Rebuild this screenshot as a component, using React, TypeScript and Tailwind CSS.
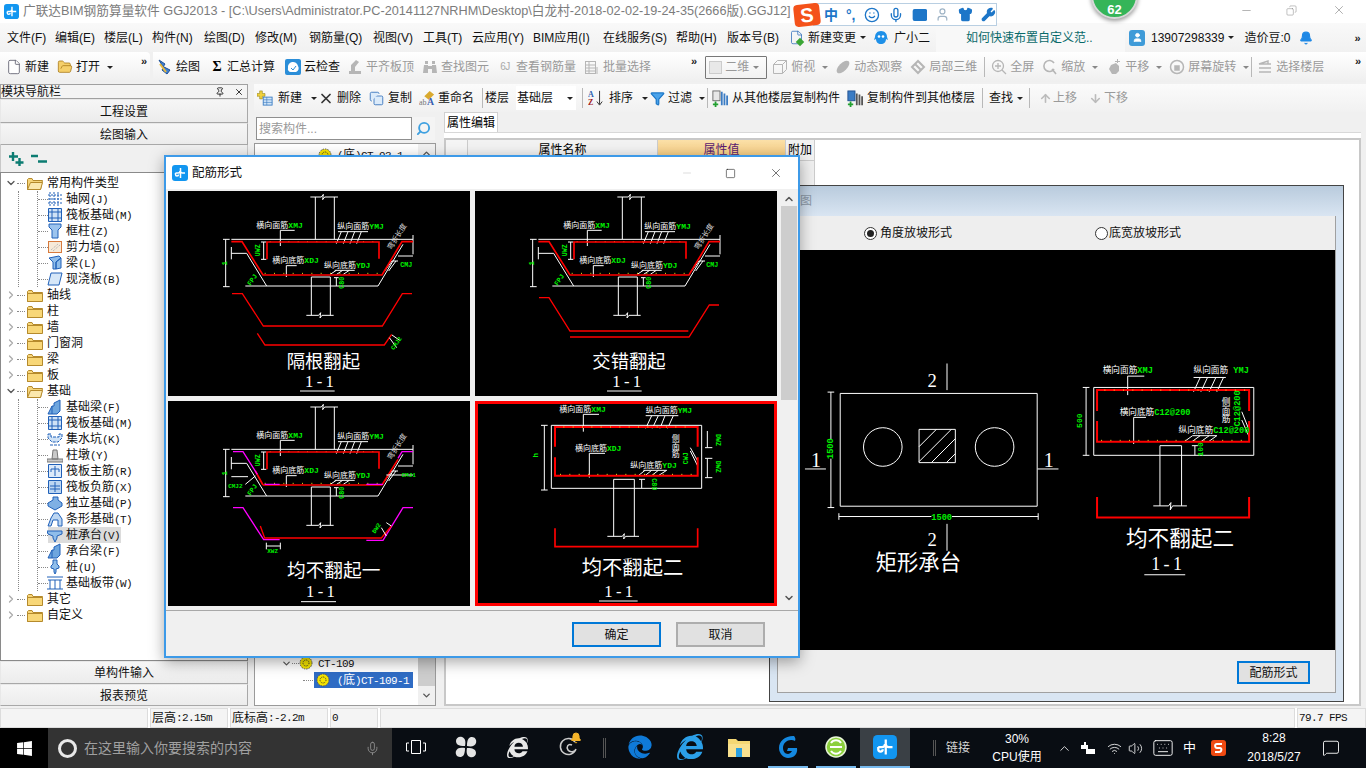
import type { ReactNode } from "react";
import { File, FolderOpen, Mic, Search, Wifi, Volume2, ChevronUp, ChevronDown, ChevronRight, X, Minus, Square, Copy, Pin, Filter, ArrowUp, ArrowDown, Bell, Wrench, Smile, Keyboard, Shirt, User, MessageSquare } from "lucide-react";
import { FaEdge, FaInternetExplorer, FaWindows } from "react-icons/fa";

const UI = "[font-family:'Liberation_Sans','Noto_Sans_CJK_SC',sans-serif]";
const CAD_FONT = "'Liberation Mono','Noto Sans CJK SC',monospace";
const CAD_TITLE = "'Liberation Serif','Noto Sans CJK SC',serif";

// ascii parts of the old tree font are narrow, 6px per char
const Mixed = ({ text }: { text: string }) => (
  <>
    {text.split(/([\x00-\x7f]+)/).map((part, i) =>
      /^[\x00-\x7f]+$/.test(part) ? (
        <span key={i} className="text-[11px] tracking-[-0.6px] [font-family:'Liberation_Mono',monospace]">
          {part}
        </span>
      ) : (
        <span key={i}>{part}</span>
      ),
    )}
  </>
);

const GldLogo = ({ size = 16 }: { size?: number }) => (
  <svg width={size} height={size} viewBox="0 0 16 16">
    <rect width="16" height="16" rx="3" fill="#1296f0" />
    <path d="M8.5 3v10M3.5 8h2.5a2 2 0 0 0 2-2M13 8h-2.5a2 2 0 0 1-2-2M3.5 8v1.5a1.5 1.5 0 0 0 3 0" stroke="#fff" strokeWidth="1.5" fill="none" />
  </svg>
);

const Caret = () => <span className="w-0 h-0 border-x-[3px] border-x-transparent border-t-[3px] border-t-[#222] ml-1" />;
const GrayCaret = () => <span className="w-0 h-0 border-x-[3px] border-x-transparent border-t-[3px] border-t-[#888] ml-1" />;
const More = () => <span className="text-[11px] font-bold text-[#222] leading-none">»</span>;
const Sep = () => <span className="w-px h-[20px] bg-[#b8b8b8] shrink-0 block" />;

const gray = "#b6b6b6";
const toolIcons: Record<string, ReactNode> = {
  file: <File size={16} strokeWidth={1.2} color="#556" fill="#fff" />,
  open: <FolderOpen size={16} strokeWidth={1.2} color="#a87a18" fill="#f5cf6a" />,
  draw: (
    <svg width="16" height="16" viewBox="0 0 16 16">
      <path d="M2 1l6 4-2 3zM7 8l6 3-3 4-5-4z" fill="#3f7fd0" stroke="#1d4f96" />
      <path d="M3 5l6 8" stroke="#e8b93c" strokeWidth="2" />
    </svg>
  ),
  sigma: <span className="text-[14px] font-bold text-black leading-none [font-family:'Liberation_Serif',serif]">Σ</span>,
  cloud: (
    <svg width="16" height="16" viewBox="0 0 16 16">
      <rect width="16" height="16" rx="2" fill="#2b8ed8" />
      <path d="M3 9a5 5 0 0 1 10-2 4 4 0 0 1-2 6H6a3 3 0 0 1-3-4z" fill="#fff" />
      <path d="M6 9l2 2 3-4" stroke="#2b8ed8" fill="none" />
    </svg>
  ),
  level: (
    <svg width="16" height="16" viewBox="0 0 16 16" fill={gray}>
      <path d="M2 12h12v3H2zM4 6l5-5 3 2-4 5v4H4z" />
    </svg>
  ),
  binoc: (
    <svg width="16" height="16" viewBox="0 0 16 16" fill={gray}>
      <path d="M2 6h4v8H1zM10 6h4l1 8h-5zM3 2h3v3H3zM10 2h3v3h-3zM6 7h4v3H6z" />
    </svg>
  ),
  rebar: <span className="text-[10px] text-[#aaa] leading-none tracking-tighter">6J</span>,
  batch: (
    <svg width="16" height="16" viewBox="0 0 16 16" fill="none" stroke={gray}>
      <rect x="1.5" y="2.5" width="10" height="12" />
      <path d="M1.5 6h10M1.5 9h10M1.5 12h10M5 2.5v12M13 8v7" />
    </svg>
  ),
  box: (
    <svg width="16" height="16" viewBox="0 0 16 16" fill="none" stroke={gray}>
      <path d="M1.5 5.5l4-4h9v9l-4 4h-9zM1.5 5.5h9v9M10.5 5.5l4-4" />
    </svg>
  ),
  orbit: (
    <svg width="16" height="16" viewBox="0 0 16 16" fill={gray}>
      <ellipse cx="8" cy="8" rx="8" ry="4" transform="rotate(-45 8 8)" />
    </svg>
  ),
  local: (
    <svg width="16" height="16" viewBox="0 0 16 16" fill="none" stroke={gray} strokeWidth="2">
      <path d="M2 8l6-6 6 6-6 6z" />
      <path d="M5 5l6 6" />
    </svg>
  ),
  zoomAll: (
    <svg width="16" height="16" viewBox="0 0 16 16" fill="none" stroke={gray} strokeWidth="1.3">
      <circle cx="7" cy="7" r="5.5" />
      <path d="M11 11l4 4M7 4v6M4 7h6" />
    </svg>
  ),
  zoom: (
    <svg width="16" height="16" viewBox="0 0 16 16" fill="none" stroke={gray} strokeWidth="1.6">
      <path d="M12 4a5.5 5.5 0 1 0 0 6M10 10l4 5" />
    </svg>
  ),
  pan: (
    <svg width="16" height="16" viewBox="0 0 16 16" fill={gray}>
      <path d="M5 6l5-2 3 3v5l-3 3H6L3 10zM11 0h1v4h-1zM9 2h5v1H9z" />
    </svg>
  ),
  rotate: (
    <svg width="16" height="16" viewBox="0 0 16 16" fill="none" stroke={gray} strokeWidth="1.5">
      <circle cx="8" cy="8" r="6.5" />
      <rect x="6" y="7" width="4" height="4" fill={gray} />
    </svg>
  ),
  floors: (
    <svg width="16" height="16" viewBox="0 0 16 16" fill="none" stroke={gray} strokeWidth="1.4">
      <path d="M2 5l9-3v3M2 5h12M2 9h12M2 13h12" />
    </svg>
  ),
  newComp: (
    <svg width="18" height="18" viewBox="0 0 18 18">
      <path d="M3 1h3v3h3v3H6v3H3V7H0V4h3z" fill="#f2d23c" stroke="#8a7a10" strokeWidth=".6" />
      <rect x="7" y="8" width="10" height="9" fill="#cfe4f7" stroke="#3b7cc4" />
      <path d="M7 11h10M7 14h10M11 8v9" stroke="#3b7cc4" strokeWidth=".7" />
    </svg>
  ),
  del: <X size={17} strokeWidth={2.6} color="#333" />,
  copy: <Copy size={15} strokeWidth={1.3} color="#2a6ab8" fill="#dcebfa" />,
  rename: (
    <svg width="18" height="18" viewBox="0 0 18 18">
      <path d="M6 7l6-6 5 4-6 6z" fill="#d9a92e" />
      <text x="0" y="17" fontSize="9" fill="#777" fontFamily="serif">ab</text>
      <text x="9" y="17" fontSize="11" fontWeight="700" fill="#3a5fb0" fontFamily="serif">A</text>
    </svg>
  ),
  sort: (
    <svg width="18" height="18" viewBox="0 0 18 18">
      <text x="0" y="8" fontSize="9" fontWeight="700" fill="#2b5fb0" fontFamily="serif">A</text>
      <text x="0" y="17" fontSize="9" fontWeight="700" fill="#a02020" fontFamily="serif">Z</text>
      <path d="M13 1v15M10 13l3 4 3-4" stroke="#222" fill="none" />
    </svg>
  ),
  filter: <Filter size={15} color="#1d78c8" fill="#4aa3ea" />,
  fromFloor: (
    <svg width="18" height="19" viewBox="0 0 18 19">
      <rect x="1" y="1" width="8" height="11" fill="#e7e7e7" stroke="#666" />
      <path d="M11 2v15M14 4v13M17 6v11" stroke="#3b7cc4" strokeWidth="2" />
      <path d="M1 16h6M4 13v6" stroke="#22a030" strokeWidth="2" />
    </svg>
  ),
  toFloor: (
    <svg width="18" height="19" viewBox="0 0 18 19">
      <rect x="1" y="1" width="8" height="11" fill="#3b7cc4" stroke="#214f8f" />
      <path d="M11 4v13M14 5v12M17 7v10" stroke="#555" strokeWidth="2" />
      <path d="M1 16h6M4 13v6" stroke="#22a030" strokeWidth="2" />
    </svg>
  ),
  up: <ArrowUp size={13} strokeWidth={3} color="#bbb" />,
  down: <ArrowDown size={13} strokeWidth={3} color="#bbb" />,
};

type Tool = { icon: string; label: string; width: string; gap?: string; off?: boolean; caret?: boolean };

const ToolBtn = ({ icon, label, width, gap = "gap-[3px]", off, caret }: Tool) => (
  <div className={`flex items-center shrink-0 ${width} ${gap} ${off ? "text-[#9a9a9a]" : "text-[#111]"}`}>
    <span className="w-4 h-4 flex items-center justify-center shrink-0">{toolIcons[icon]}</span>
    <span className="whitespace-nowrap">{label}</span>
    {caret && (off ? <GrayCaret /> : <Caret />)}
  </div>
);

const menus = ["文件(F)", "编辑(E)", "楼层(L)", "构件(N)", "绘图(D)", "修改(M)", "钢筋量(Q)", "视图(V)", "工具(T)", "云应用(Y)", "BIM应用(I)", "在线服务(S)", "帮助(H)", "版本号(B)"];
const menuWidths = ["w-[48px]", "w-[49px]", "w-[48px]", "w-[52px]", "w-[51px]", "w-[54px]", "w-[64px]", "w-[50px]", "w-[49px]", "w-[61px]", "w-[70px]", "w-[73px]", "w-[51px]", "w-[62px]"];

const TitleBar = () => (
  <div className="h-[23px] bg-white flex items-center text-[12.7px] text-[#7c7c7c]">
    <div className="w-[23px] flex justify-center">
      <GldLogo size={15} />
    </div>
    <span className="whitespace-nowrap">广联达BIM钢筋算量软件 GGJ2013 - [C:\Users\Administrator.PC-20141127NRHM\Desktop\白龙村-2018-02-02-19-24-35(2666版).GGJ12]</span>
    <div className="ml-auto flex items-center text-[#777] -mt-[3px]">
      <Minus size={13} strokeWidth={1} className="mr-[33px]" />
      <Copy size={11} strokeWidth={1} className="mr-[35px] -scale-x-100" />
      <X size={14} strokeWidth={1} className="mr-[20px]" />
    </div>
  </div>
);

const MenuBar = () => (
  <div className="h-[29px] bg-gradient-to-b from-[#f9f9f9] to-[#f1f1f1] flex items-center text-[12px] text-[#111] pl-[7px]">
    {menus.map((m, i) => (
      <span key={m} className={`${menuWidths[i]} whitespace-nowrap`}>
        {m}
      </span>
    ))}
    <div className="w-[85px] flex items-center whitespace-nowrap">
      <span className="relative mr-[3px] flex">
        <File size={15} strokeWidth={1.2} color="#2a6ab8" />
        <span className="absolute right-[1px] bottom-0 w-[6px] h-[6px] rotate-45 bg-[#3aa535]" />
      </span>
      <span className="ml-[1px]">新建变更</span>
      <Caret />
    </div>
    <div className="w-[62px] flex items-center">
      <svg width="14" height="14" viewBox="0 0 14 14" className="mr-[6px]">
        <path d="M7 0c4 0 6 3 6 6l1 3-2-1c0 3-2 5-5 5S2 11 2 8L0 9l1-3c0-3 2-6 6-6z" fill="#1e90e8" />
        <circle cx="5" cy="5.5" r="1.3" fill="#fff" />
        <circle cx="9" cy="5.5" r="1.3" fill="#fff" />
      </svg>
      <span className="whitespace-nowrap">广小二</span>
    </div>
    <div className="w-[189px] h-full bg-[#f8f8f8] flex items-center pl-[30px] text-[#0a6a6a] whitespace-nowrap">如何快速布置自定义范..</div>
    <div className="flex items-center w-[241px] pl-[4px] whitespace-nowrap">
      <span className="w-4 h-4 rounded-[3px] bg-[#3f9bd8] flex items-center justify-center mr-[6px] shrink-0">
        <User size={11} color="#fff" fill="#fff" />
      </span>
      <span>13907298339</span>
      <Caret />
      <span className="ml-[10px]">造价豆:0</span>
      <Bell size={14} color="#1e88e5" fill="#1e88e5" className="ml-[9px] shrink-0" />
      <span className="ml-[41px]"><More /></span>
    </div>
  </div>
);

const seg1: Tool[] = [
  { icon: "file", label: "新建", width: "w-[51px]" },
  { icon: "open", label: "打开", width: "w-[60px]", caret: true },
];
const seg2: Tool[] = [
  { icon: "draw", label: "绘图", width: "w-[52px]" },
  { icon: "sigma", label: "汇总计算", width: "w-[76px]", gap: "gap-[2px]" },
  { icon: "cloud", label: "云检查", width: "w-[62px]", gap: "gap-[3px]" },
  { icon: "level", label: "平齐板顶", width: "w-[75px]", off: true },
  { icon: "binoc", label: "查找图元", width: "w-[75px]", off: true },
  { icon: "rebar", label: "查看钢筋量", width: "w-[87px]", off: true },
  { icon: "batch", label: "批量选择", width: "w-[67px]", off: true },
];
const seg3a: Tool[] = [
  { icon: "box", label: "俯视", width: "w-[63px]", off: true, caret: true },
  { icon: "orbit", label: "动态观察", width: "w-[75px]", off: true },
  { icon: "local", label: "局部三维", width: "w-[71px]", off: true },
];
const seg3b: Tool[] = [
  { icon: "zoomAll", label: "全屏", width: "w-[51px]", off: true },
  { icon: "zoom", label: "缩放", width: "w-[64px]", off: true, caret: true },
  { icon: "pan", label: "平移", width: "w-[63px]", off: true, caret: true },
  { icon: "rotate", label: "屏幕旋转", width: "w-[81px]", off: true, caret: true },
];

const MainToolbar = () => (
  <div className="h-[30px] flex text-[12px]">
    <div className="w-[150px] bg-gradient-to-b from-white to-[#efefef] flex items-center pl-[6px] pr-[3px] rounded-r">
      {seg1.map((t) => (
        <ToolBtn key={t.label} {...t} />
      ))}
      <span className="ml-auto -mt-3"><More /></span>
    </div>
    <div className="flex-1 ml-[3px] bg-gradient-to-b from-white to-[#efefef] flex items-center pl-[4px] pr-[4px]">
      {seg2.map((t) => (
        <ToolBtn key={t.label} {...t} />
      ))}
      <span className="ml-[40px] mr-[8px] -mt-3"><More /></span>
      <div className="w-[62px] h-[23px] border border-[#777] rounded-[1px] flex items-center px-[3px] text-[#999] mr-[5px]">
        <span className="w-[13px] h-[13px] border border-[#ccc] bg-[#e8e8e8] mr-[3px]" />
        二维
        <GrayCaret />
      </div>
      {seg3a.map((t) => (
        <ToolBtn key={t.label} {...t} />
      ))}
      <span className="mr-[6px] ml-[3px]"><Sep /></span>
      {seg3b.map((t) => (
        <ToolBtn key={t.label} {...t} />
      ))}
      <span className="mr-[5px] ml-[1px]"><Sep /></span>
      <ToolBtn icon="floors" label="选择楼层" width="w-[70px]" off />
      <span className="ml-auto -mt-3 mr-[1px]"><More /></span>
    </div>
  </div>
);

const SecondToolbar = () => (
  <div className="h-[28px] ml-[6px] bg-gradient-to-b from-[#fbfbfb] to-[#f1f1f1] flex items-center text-[12px] text-[#111] pl-[3px]">
    <ToolBtn icon="newComp" label="新建" width="w-[61px]" gap="gap-[5px]" caret />
    <ToolBtn icon="del" label="删除" width="w-[50px]" />
    <ToolBtn icon="copy" label="复制" width="w-[51px]" gap="gap-[4px]" />
    <ToolBtn icon="rename" label="重命名" width="w-[63px]" />
    <Sep />
    <span className="ml-[2px] w-[31px]">楼层</span>
    <div className="w-[60px] h-[24px] bg-white flex items-center pl-[1px] justify-between pr-[3px]">
      基础层
      <Caret />
    </div>
    <span className="ml-[6px] mr-[5px]"><Sep /></span>
    <ToolBtn icon="sort" label="排序" width="w-[61px]" gap="gap-[5px]" caret />
    <ToolBtn icon="filter" label="过滤" width="w-[58px]" caret />
    <Sep />
    <span className="w-[4px]" />
    <ToolBtn icon="fromFloor" label="从其他楼层复制构件" width="w-[135px]" gap="gap-[4px]" />
    <ToolBtn icon="toFloor" label="复制构件到其他楼层" width="w-[135px]" gap="gap-[4px]" />
    <Sep />
    <span className="ml-[6px] flex items-center w-[40px]">查找<Caret /></span>
    <Sep />
    <span className="w-[7px]" />
    <ToolBtn icon="up" label="上移" width="w-[50px]" gap="gap-0" off />
    <ToolBtn icon="down" label="下移" width="w-[50px]" gap="gap-[1px]" off />
  </div>
);

const B = "#2060b8";
const treeIcons: Record<string, ReactNode> = {
  grid: <path d="M3 1v14M7 1v14M11 1v14M1 4h14M1 8h14M1 12h14" stroke={B} fill="none" strokeDasharray="2 1" />,
  raft: <path d="M1.5 1.5h13v13h-13zM5 5h6v6H5zM1.5 5H5M11 5h3.5M1.5 11H5M11 11h3.5M5 1.5V5M11 1.5V5M5 11v3.5M11 11v3.5" stroke={B} fill="#cfe2f6" />,
  column: <path d="M2 1h12v3l-3 3v8H5V7L2 4z" stroke={B} fill="#9cc4ee" />,
  wall: (
    <>
      <rect x="1.5" y="2.5" width="13" height="11" fill="#f7ead8" stroke="#d87a3c" />
      <path d="M4 11l7-6M6 12l7-6" stroke="#aaa" strokeDasharray="1 1" />
    </>
  ),
  beam: <path d="M2 3l10-2 2 2-5 4v7H6V7zM9 7l5-4v10l-5 1z" stroke={B} fill="#8fbdea" />,
  slab: <path d="M4 2h11l-3 12H1z" stroke={B} fill="#d6e7f8" />,
  fbeam: <path d="M1 15l4-8h2V4l6-3v11l-3 3zM5 7v8" stroke={B} fill="#6ea6de" />,
  pit: <path d="M1 3h3v3h8V3h3v4l-4 4H5L1 7zM3 14h10" stroke={B} fill="#cfe2f6" strokeDasharray="3 1" />,
  pier: <path d="M0 12h16v3H0zM6 3h4l1 9H5z" stroke="#777" fill="#c9c9c9" />,
  main: <path d="M1.5 1.5h13v13h-13zM8 3v10M4 6h8M4 6v3M12 6v3" stroke={B} fill="#dceafa" />,
  neg: <path d="M1.5 1.5h13v13h-13zM8 3v10M3 7h10M3 10h10" stroke={B} fill="#bcd6f2" />,
  iso: <path d="M1 8l5-3V2h5v3l4 3v3l-7 4-7-4z" stroke={B} fill="#7fb0e4" />,
  strip: <path d="M1 15l3-8 3-5h4l4 6v7H11V9H6l-2 6z" stroke={B} fill="#bcd6f2" />,
  cap: <path d="M0 4h15v3l-5 2v2l-2 4-2-4V9L1 7z" stroke={B} fill="#8fbdea" />,
  pile: <path d="M6 1h4v4l2 2v2l-3 1v3l-1 2-1-2v-3L4 9V7l2-2z" stroke={B} fill="#8fbdea" />,
  band: <path d="M0 2h16M0 14h16M3 5v9M8 5v9M13 5v9M1 5h14" stroke={B} fill="none" />,
};

const common: [string, string][] = [["grid", "轴网(J)"], ["raft", "筏板基础(M)"], ["column", "框柱(Z)"], ["wall", "剪力墙(Q)"], ["beam", "梁(L)"], ["slab", "现浇板(B)"]];
const base: [string, string][] = [["fbeam", "基础梁(F)"], ["raft", "筏板基础(M)"], ["pit", "集水坑(K)"], ["pier", "柱墩(Y)"], ["main", "筏板主筋(R)"], ["neg", "筏板负筋(X)"], ["iso", "独立基础(P)"], ["strip", "条形基础(T)"], ["cap", "桩承台(V)"], ["fbeam", "承台梁(F)"], ["pile", "桩(U)"], ["band", "基础板带(W)"]];

const FolderIcon = ({ open }: { open?: boolean }) => (
  <svg width="16" height="13" viewBox="0 0 16 13" className="shrink-0">
    <path d="M.5 2.5v10h13l2-9H6L5 1.500H1.500z" fill="#f6d57a" stroke="#b58a2c" />
    {open ? <path d="M.5 12.500l3-7h12l-2 7z" fill="#fbe8ad" stroke="#b58a2c" /> : <path d="M.5 4.500h15v8H.5z" fill="#f8d778" stroke="#b58a2c" />}
  </svg>
);

const FolderRow = ({ label, open }: { label: string; open?: boolean }) => (
  <div className="h-4 flex items-center">
    <span className="w-[14px] flex justify-end">
      {open ? <ChevronDown size={12} strokeWidth={2.5} color="#555" /> : <ChevronRight size={12} strokeWidth={2.5} color="#aaa" />}
    </span>
    <span className="w-[8px] border-t border-dotted border-[#888] mr-[2px]" />
    <FolderIcon open={open} />
    <span className="ml-[4px] whitespace-nowrap">{label}</span>
  </div>
);

const ChildRow = ({ kind, label, active, last }: { kind: string; label: string; active?: boolean; last?: boolean }) => (
  <div className={`h-4 flex items-center ${last ? "-mb-2" : ""}`}>
    <span className="w-[10px] border-t border-dotted border-[#888]" />
    <div className={`flex items-center h-4 ${active ? "bg-[#dcdcdc]" : ""}`}>
      <svg width="16" height="16" viewBox="0 0 16 16" className="shrink-0 -ml-[1px]">
        {treeIcons[kind]}
      </svg>
      <span className="ml-[3px] mr-[1px] whitespace-nowrap">
        <Mixed text={label} />
      </span>
    </div>
  </div>
);

const Group = ({ label, items }: { label: string; items: [string, string][] }) => (
  <>
    <FolderRow label={label} open />
    <div className="ml-[15px] border-l border-dotted border-[#888]">
      <div className="ml-[18px] mb-2 border-l border-dotted border-[#888]">
        {items.map(([k, l], i) => (
          <ChildRow key={l + i} kind={k} label={l} active={l === "桩承台(V)"} last={i === items.length - 1} />
        ))}
      </div>
    </div>
  </>
);

const NavButton = ({ label, h }: { label: string; h: string }) => (
  <div className={`${h} border border-[#a8a8a8] border-t-[#e8e8e8] border-l-[#e8e8e8] bg-gradient-to-b from-[#f6f6f6] to-[#ececec] flex items-center justify-center pt-[1px]`}>{label}</div>
);

const LeftPanel = () => (
  <div className="w-[248px] shrink-0 flex flex-col text-[12px] text-[#111] bg-[#f0f0f0]">
    <div className="h-[15px] flex items-center border border-[#a0a0a0] bg-[#f4f4f4] leading-none">
      <span className="whitespace-nowrap">模块导航栏</span>
      <Pin size={10} className="ml-auto mr-[9px]" />
      <X size={10} className="mr-[3px]" />
    </div>
    <NavButton label="工程设置" h="h-[24px]" />
    <NavButton label="绘图输入" h="h-[22px]" />
    <div className="h-[27px] flex items-center pl-[7px] gap-[6px] border-x border-[#c8c8c8]">
      <svg width="17" height="16" viewBox="0 0 17 16">
        <path d="M5 1v9M1 5.500h9M11.500 7v8M7.500 11.500h8" stroke="#0c7c72" strokeWidth="2.400" />
      </svg>
      <svg width="17" height="16" viewBox="0 0 17 16">
        <path d="M0 5h7M7 10.500h9" stroke="#0c7c72" strokeWidth="2.400" />
      </svg>
    </div>
    <div className="flex-1 min-h-0 bg-white border border-[#8a8a8a] pt-[2px] pl-[2px]">
      <Group label="常用构件类型" items={common} />
      {["轴线", "柱", "墙", "门窗洞", "梁", "板"].map((f) => (
        <FolderRow key={f} label={f} />
      ))}
      <Group label="基础" items={base} />
      <FolderRow label="其它" />
      <FolderRow label="自定义" />
    </div>
    <NavButton label="单构件输入" h="h-[23px]" />
    <NavButton label="报表预览" h="h-[22px]" />
  </div>
);

const CapIcon = () => (
  <svg width="14" height="14" viewBox="0 0 14 14" className="shrink-0">
    <circle cx="7" cy="7" r="6" fill="#f5e400" stroke="#555" strokeDasharray="1.500 1" />
    <circle cx="7" cy="7" r="3" fill="none" stroke="#333" strokeDasharray="1 1" />
  </svg>
);

const ListPanel = () => (
  <div className="w-[182px] shrink-0 flex flex-col">
    <div className="h-[31px] pt-[5px] pl-[2px] flex">
      <div className="w-[156px] h-[23px] bg-white border border-[#8f8f8f] flex items-center pl-[2px] text-[12px] text-[#999]">搜索构件...</div>
      <div className="w-[23px] h-[23px] bg-[#f4f4f4] flex items-center justify-center">
        <Search size={15} strokeWidth={3} color="#3ea0e0" className="-scale-x-100" />
      </div>
    </div>
    <div className="flex-1 min-h-0 bg-white border border-[#9a9a9a] flex text-[12px] text-[#111]">
      <div className="flex-1 flex flex-col pt-[3px]">
        <div className="h-4 flex items-center pl-[50px]">
          <span className="w-[12px] border-t border-dotted border-[#888] mr-[1px]" />
          <CapIcon />
          <span className="ml-[5px] whitespace-nowrap"><Mixed text="(底)CT-93-1" /></span>
        </div>
        <div className="flex-1" />
        <div className="h-4 flex items-center pl-[26px] mb-[1px]">
          <ChevronDown size={11} strokeWidth={2.5} color="#555" />
          <span className="w-[7px] border-t border-dotted border-[#888]" />
          <CapIcon />
          <span className="ml-[5px] whitespace-nowrap"><Mixed text="CT-109" /></span>
        </div>
        <div className="h-[16px] flex items-center pl-[48px] mb-[17px]">
          <span className="w-[10px] border-t border-dotted border-[#888]" />
          <div className="ml-[1px] w-[99px] h-[16px] bg-[#2f6cc4] text-white flex items-center pl-[2px]">
            <CapIcon />
            <span className="ml-[7px] whitespace-nowrap"><Mixed text="(底)CT-109-1" /></span>
          </div>
        </div>
      </div>
      <div className="w-[17px] bg-[#f0f0f0] flex flex-col items-center justify-between">
        <ChevronUp size={11} strokeWidth={3} color="#555" className="mt-[4px]" />
        <div className="flex flex-col items-center w-full">
          <div className="w-full h-[36px] bg-[#cdcdcd]" />
          <ChevronDown size={11} strokeWidth={3} color="#555" className="my-[4px]" />
        </div>
      </div>
    </div>
  </div>
);

const PropPanel = () => (
  <div className="flex-1 ml-[8px] mr-[5px] flex flex-col text-[12px]">
    <div className="h-[20px] flex">
      <div className="w-[54px] bg-white border border-b-0 border-[#d0d0d0] flex items-center justify-center">属性编辑</div>
    </div>
    <div className="flex-1 min-h-0 bg-white border-t border-[#d8d8d8] pt-[5px]">
      <div className="h-full border-2 border-[#c8c8c8] border-l-[#c8c8c8] flex flex-col">
        <div className="flex h-[20px] text-center leading-[20px]">
          <div className="w-[22px] bg-[#f5f5f5] border-r border-[#ccc]" />
          <div className="w-[190px] bg-[#f2f2f2] border-r border-[#ccc]">属性名称</div>
          <div className="w-[127px] bg-gradient-to-b from-[#fbe0a8] to-[#f5c878] text-[#5a1a70]">属性值</div>
          <div className="w-[30px] bg-[#f2f2f2] border-x border-[#ccc]">附加</div>
        </div>
        <div className="flex h-[26px]">
          <div className="w-[339px]" />
          <div className="w-[30px] bg-[#efefef] border-x border-t border-[#ccc]" />
        </div>
      </div>
    </div>
  </div>
);

const StatusBar = () => (
  <div className="h-[20px] mt-[2px] flex gap-[2px] text-[12px] text-[#111] bg-white">
    <div className="w-[148px] bg-[#f4f4f4] border border-[#dcdcdc]" />
    <div className="w-[78px] bg-[#f4f4f4] border border-[#dcdcdc] flex items-center pl-[1px]"><Mixed text="层高:2.15m" /></div>
    <div className="w-[98px] bg-[#f4f4f4] border border-[#dcdcdc] flex items-center pl-[1px]"><Mixed text="底标高:-2.2m" /></div>
    <div className="w-[48px] bg-[#f4f4f4] border border-[#dcdcdc] flex items-center pl-[1px]"><Mixed text="0" /></div>
    <div className="flex-1 bg-[#f4f4f4] border border-[#dcdcdc]" />
    <div className="w-[69px] bg-[#f4f4f4] border border-[#dcdcdc] flex items-center pl-[1px]"><Mixed text="79.7 FPS" /></div>
  </div>
);

const SCALE_TEXT = { fontFamily: CAD_FONT };

const Lab = ({ x, y, cn, en, s = 24 }: { x: number; y: number; cn: string; en: string; s?: number }) => (
  <text x={x} y={y} fontSize={s} style={SCALE_TEXT}>
    <tspan fill="#fff">{cn}</tspan>
    <tspan fill="#00f000" fontWeight="700">{en}</tspan>
  </text>
);

const Green = ({ x, y, r = 0, s = 22, children }: { x: number; y: number; r?: number; s?: number; children: string }) => (
  <text x={x} y={y} fontSize={s} fill="#00f000" fontWeight="700" textAnchor="middle" transform={r ? `rotate(${r} ${x} ${y})` : undefined} style={SCALE_TEXT}>
    {children}
  </text>
);

const Title = ({ x, y, text, s = 55, ux1, ux2, uy, ox }: { x: number; y: number; text: string; s?: number; ux1: number; ux2: number; uy: number; ox: number }) => (
  <>
    <text x={x} y={y} fontSize={s} fill="#fff" style={{ fontFamily: CAD_TITLE }}>
      {text}
    </text>
    <text x={ox} y={uy - 13} fontSize={50} fill="#fff" letterSpacing="10" style={{ fontFamily: "'Liberation Serif',serif" }}>
      1-1
    </text>
    <path d={`M${ux1} ${uy}H${ux2}`} stroke="#fff" strokeWidth="3" />
  </>
);

const Dots = ({ y, x1, x2, step = 25 }: { y: number; x1: number; x2: number; step?: number }) => (
  <path d={`M${x1} ${y}H${x2}`} stroke="#f0e020" strokeWidth="3" strokeDasharray={`3 ${step}`} />
);

const SlopeFrame = () => (
  <>
    <path
      d="M442 145V18M499 145V18M427 18H460L466 10L464 26L470 18H510M190 145H735M173 145V287M165 145H185M165 287H185M232 285H630M236 187L296 285M630 285L705 160M190 187H236M190 168V205M735 132V190M690 195H735M430 373V258H487V373M415 373H452L458 365L456 381L462 373H497M337 165V118H380M355 258V224H386M287 153V205M279 153H295M279 205H295M505 158L520 122M526 158L540 122M546 158L560 122M566 158L580 122M510 122H600M487 250L505 238M506 250L524 238M526 250L544 238M500 238H560M505 260V285M498 260H512M650 240L672 210M662 240L684 210M672 210H690"
      stroke="#fff"
      strokeWidth="3"
      fill="none"
    />
    <Dots y={152} x1={305} x2={630} />
    <Dots y={247} x1={290} x2={640} />
    <Lab x={265} y={110} cn="横向面筋" en="XMJ" />
    <Lab x={508} y={113} cn="纵向面筋" en="YMJ" />
    <Lab x={313} y={216} cn="横向底筋" en="XDJ" />
    <Lab x={468} y={232} cn="纵向底筋" en="YDJ" />
    <text x={670} y={178} fontSize={22} fill="#ddd" transform="rotate(-58 670 178)" style={SCALE_TEXT}>
      弯折长度
    </text>
    <Green x={176} y={217} r={-90}>1</Green>
    <Green x={276} y={178} r={-90} s={20}>UWZ</Green>
    <Green x={528} y={275} r={-90} s={20}>C80</Green>
    <Green x={258} y={270} r={-55} s={20}>FPJ</Green>
  </>
);

const Red = ({ d, w = 5, c = "#ff0000" }: { d: string; w?: number; c?: string }) => <path d={d} stroke={c} strokeWidth={w} fill="none" />;

const Panel = ({ children, active }: { children: ReactNode; active?: boolean }) => (
  <div className={`w-[302px] h-[205px] bg-black ${active ? "outline-[3px] outline-[#ff0000] -outline-offset-3" : ""}`}>
    <svg viewBox="0 0 906 615" className="w-full h-full block">
      {children}
    </svg>
  </div>
);

const OptionDialog = () => (
  <div className="absolute left-[164px] top-[155px] w-[636px] h-[503px] bg-[#f0f0f0] border-2 border-[#3d9ae8] shadow-[0_4px_14px_rgba(0,0,0,0.35)] flex flex-col text-[12px] text-[#111]">
    <div className="h-[32px] bg-white flex items-center pl-[6px] shrink-0">
      <GldLogo size={16} />
      <span className="ml-[4px] text-[12.5px]">配筋形式</span>
      <Minus size={12} strokeWidth={1} className="ml-auto mr-[32px]" color="#bbb" />
      <Square size={11} strokeWidth={1.2} className="mr-[33px]" color="#111" />
      <X size={14} strokeWidth={1} className="mr-[15px]" color="#111" />
    </div>
    <div className="flex pl-[2px] pt-[2px]">
      <div className="grid grid-cols-2 gap-[5px] w-[609px]">
        <Panel>
          <SlopeFrame />
          <Red d="M190 152H222L285 252H642L702 152H735M297 205V153H633V203" />
          <Red d="M192 308H223L286 405H643L703 308H732" w={4} />
          <Red d="M268 427L291 462H649L671 430" w={4} />
          <path d="M672 432L695 448M664 440L686 470" stroke="#fff" strokeWidth="3" />
          <Green x={690} y={460} r={-55} s={18}>CMJ2</Green>
          <Green x={715} y={228} s={20}>CMJ</Green>
          <Title x={356} y={532} text="隔根翻起" ox={411} ux1={396} ux2={500} uy={600} />
        </Panel>
        <Panel>
          <SlopeFrame />
          <Red d="M190 152H222L285 252H642L702 152H735M297 205V153H633V203" />
          <Red d="M192 320H222L285 420H640" w={4} />
          <Red d="M285 438H642L703 342H732" w={4} />
          <Green x={712} y={228} s={20}>CMJ</Green>
          <Title x={352} y={530} text="交错翻起" ox={412} ux1={396} ux2={500} uy={600} />
        </Panel>
        <Panel>
          <SlopeFrame />
          <Red d="M285 252H642M297 205V153H633V203M262 210L285 252M642 252L690 175" />
          <Red d="M195 152H225L268 220M290 250H335M595 250H645M690 172L702 152H735" c="#ff00ff" w={4} />
          <path d="M190 227H240M232 250L262 225M655 222H735" stroke="#fff" strokeWidth="3" />
          <Red d="M195 320H225L287 416H335M595 418H645L705 320H735" c="#ff00ff" w={4} />
          <Red d="M277 375L290 411H640L670 375" w={4} />
          <path d="M295 425V445M337 425V445M295 435H337M640 380L655 405M655 365L670 375" stroke="#fff" strokeWidth="3" />
          <Green x={202} y={262} s={18}>CMJ2</Green>
          <Green x={722} y={228} s={18}>CMJ1</Green>
          <Green x={314} y={457} s={18}>XWZ</Green>
          <Green x={630} y={385} r={-55} s={18}>DW2</Green>
          <Title x={357} y={527} s={56} text="均不翻起一" ox={414} ux1={399} ux2={504} uy={602} />
        </Panel>
        <Panel active>
          <path
            d="M229 73H680V262H229ZM416 406V235H478V406M397 406H442L448 398L446 414L452 406H492M208 73V267M198 73H218M198 267H218M325 92V40H372M343 230V157H390M512 82L530 44M532 82L550 44M555 82L570 44M578 82L595 44M512 44H610M490 224L510 208M510 224L530 208M530 224L550 208M550 224L575 208M505 208H575M500 235V262M492 235H510M697 90V140M690 140H712M697 172V230M690 172H712M690 230H712M646 140L668 180M646 150L668 195"
            stroke="#fff"
            strokeWidth="3"
            fill="none"
          />
          <Red d="M240 137V78H668V137M240 169V224H668V169" w={6} />
          <Red d="M240 382V437H668V382" w={5} />
          <Dots y={78} x1={265} x2={650} />
          <Dots y={220} x1={255} x2={650} />
          <Lab x={253} y={34} cn="横向面筋" en="XMJ" />
          <Lab x={512} y={36} cn="纵向面筋" en="YMJ" />
          <Lab x={300} y={150} cn="横向底筋" en="XDJ" />
          <Lab x={466} y={200} cn="纵向底筋" en="YDJ" />
          <text x={599} y={98} fontSize={24} fill="#fff" style={{ ...SCALE_TEXT, writingMode: "vertical-rl" }}>
            侧面筋
          </text>
          <Green x={190} y={163} r={-90}>h</Green>
          <Green x={640} y={172} r={-90} s={20}>CWJ</Green>
          <Green x={722} y={117} r={90} s={20}>DWZ</Green>
          <Green x={722} y={197} r={90} s={20}>DWZ</Green>
          <Green x={530} y={250} r={90} s={20}>C80</Green>
          <Title x={320} y={522} s={61} text="均不翻起二" ox={388} ux1={372} ux2={488} uy={600} />
        </Panel>
      </div>
      <div className="w-[16px] ml-[4px] bg-[#f0f0f0] flex flex-col items-center">
        <ChevronUp size={12} strokeWidth={3} color="#555" className="mt-[2px] mb-[1px]" />
        <div className="w-full h-[194px] bg-[#cdcdcd]" />
        <ChevronDown size={12} strokeWidth={3} color="#555" className="mt-auto mb-[2px]" />
      </div>
    </div>
    <div className="mt-[4px] border-t border-[#a8a8a8] flex-1 flex justify-end items-start pt-[11px] pr-[33px] gap-[15px]">
      <div className="w-[89px] h-[25px] bg-[#e1e1e1] border-2 border-[#0078d7] flex items-center justify-center">确定</div>
      <div className="w-[89px] h-[25px] bg-[#e1e1e1] border-2 border-[#adadad] flex items-center justify-center">取消</div>
    </div>
  </div>
);

const Radio = ({ checked }: { checked?: boolean }) => (
  <span className="w-[13px] h-[13px] rounded-full border border-[#333] bg-white flex items-center justify-center shrink-0">
    {checked && <span className="w-[7px] h-[7px] rounded-full bg-[#222]" />}
  </span>
);

const PlanWindow = () => (
  <div className="absolute left-[769px] top-[185px] w-[575px] h-[517px] border border-[#444] bg-[#d9e5f2] flex flex-col text-[12px] text-[#111]">
    <div className="h-[30px] bg-gradient-to-b from-[#b9cbdd] to-[#d9e5f2] flex items-center pl-[30px] text-[#8a97a5] shrink-0">图</div>
    <div className="flex-1 mx-[7px] mb-[8px] bg-[#eeeeee] border-b border-x border-[#a0a0a0] flex flex-col">
      <div className="h-[34px] flex items-center shrink-0">
        <div className="ml-[86px] w-[231px] flex items-center gap-[3px]">
          <Radio checked />
          角度放坡形式
        </div>
        <div className="flex items-center gap-[1px]">
          <Radio />
          底宽放坡形式
        </div>
      </div>
      <div className="h-[400px] bg-black shrink-0">
        <svg viewBox="778 250 558 400" className="w-full h-full block">
          <g transform="translate(800 350) scale(0.3333)">
            <path
              d="M121 130H713V469H121ZM358 238H467V338H358ZM358 290L410 238M358 335L455 238M395 338L467 266M440 338L467 311M442 40V120M442 522V603M15 357H78M714 357H777M93 126V473M83 126H103M83 473H103M117 500H716M117 490V510M716 490V510M883 112H1364V316H883ZM860 112V316M850 112H870M850 316H870M985 135V78H1035M1003 282V202H1040M1082 468V287H1147V468M1062 468H1108L1115 458L1113 480L1120 468H1163M1183 125L1203 82M1205 125L1225 82M1230 125L1250 82M1253 125L1273 82M1183 82H1280M1155 275L1180 257M1178 275L1203 257M1205 275L1230 257M1228 275L1253 257M1180 257H1253M1187 287V316M1178 287H1196M1328 185L1350 240M1328 210L1350 260"
              stroke="#fff"
              strokeWidth="3"
              fill="none"
            />
            <circle cx="249" cy="291" r="58" stroke="#fff" strokeWidth="3" fill="none" />
            <circle cx="585" cy="291" r="58" stroke="#fff" strokeWidth="3" fill="none" />
            <path d="M893 183V120H1350V183M893 213V275H1350V213M893 441V503H1350V441" stroke="#ff0000" strokeWidth="6" fill="none" />
            <Dots y={120} x1={915} x2={1340} />
            <Dots y={271} x1={905} x2={1340} />
            {[
              [383, 110],
              [383, 590],
            ].map(([x, y]) => (
              <text key={y} x={x} y={y} fontSize={56} fill="#fff" style={{ fontFamily: "'Liberation Serif',serif" }}>
                2
              </text>
            ))}
            <text x={33} y={350} fontSize={60} fill="#fff" style={{ fontFamily: "'Liberation Serif',serif" }}>1</text>
            <text x={733} y={350} fontSize={60} fill="#fff" style={{ fontFamily: "'Liberation Serif',serif" }}>1</text>
            <rect x="75" y="268" width="36" height="58" fill="#000" />
            <Green x={98} y={296} r={-90} s={26}>1500</Green>
            <rect x="395" y="490" width="62" height="20" fill="#000" />
            <Green x={426} y={509} s={26}>1500</Green>
            <text x={228} y={660} fontSize={64} fill="#fff" style={{ fontFamily: CAD_TITLE }}>矩形承台</text>
            <Lab x={910} y={70} cn="横向面筋" en="XMJ" s={26} />
            <Lab x={1183} y={70} cn="纵向面筋" en=" YMJ" s={26} />
            <Lab x={961} y={195} cn="横向底筋" en="C12@200" s={26} />
            <Lab x={1138} y={248} cn="纵向底筋" en="C12@200" s={26} />
            <Green x={848} y={212} r={-90} s={24}>500</Green>
            <Green x={1212} y={298} r={-90} s={24}>100</Green>
            <Green x={1322} y={175} r={-90} s={26}>C12@200</Green>
            <text x={1275} y={142} fontSize={26} fill="#fff" style={{ ...SCALE_TEXT, writingMode: "vertical-rl" }}>侧面筋</text>
            <text x={980} y={588} fontSize={65} fill="#fff" style={{ fontFamily: CAD_TITLE }}>均不翻起二</text>
            <text x={1056} y={660} fontSize={54} fill="#fff" letterSpacing="10" style={{ fontFamily: "'Liberation Serif',serif" }}>1-1</text>
            <path d="M1035 675H1158" stroke="#fff" strokeWidth="3" />
          </g>
        </svg>
      </div>
      <div className="flex-1 flex justify-end items-start pt-[11px] pr-[25px]">
        <div className="w-[73px] h-[23px] bg-[#e1e1e1] border-2 border-[#0078d7] flex items-center justify-center">配筋形式</div>
      </div>
    </div>
  </div>
);

const TaskItem = ({ children, w, line, active }: { children: ReactNode; w: string; line?: boolean; active?: boolean }) => (
  <div className={`${w} h-full shrink-0 flex items-center justify-center border-b-2 ${line ? "border-[#76b9ed]" : "border-transparent"} ${active ? "bg-[#3a4045]" : ""}`}>{children}</div>
);

const Taskbar = () => (
  <div className="h-[40px] bg-[#090d13] flex items-center text-[12px] text-white">
    <div className="w-[48px] h-full bg-black flex items-center justify-center">
      <FaWindows size={17} color="#fff" />
    </div>
    <div className="w-[344px] h-full bg-[#333333] flex items-center pl-[10px] text-[#a0a0a0] text-[14px]">
      <span className="w-[19px] h-[19px] rounded-full border-[3px] border-[#e8e8e8] mr-[7px]" />
      在这里输入你要搜索的内容
      <Mic size={15} strokeWidth={1.3} color="#999" className="ml-auto mr-[12px]" />
    </div>
    <TaskItem w="w-[48px]">
      <svg width="20" height="16" viewBox="0 0 20 16" fill="none" stroke="#fff">
        <path d="M5.500 1.500h9v13h-9zM3 4H.5v8H3M17 4h2.500v8H17" />
      </svg>
    </TaskItem>
    <TaskItem w="w-[52px]">
      <svg width="22" height="22" viewBox="0 0 22 22" fill="#e4e4e4">
        <path d="M10 10C3 10 1 8 1 5s3-5 6-4 4 4 3 9zM12 10c0-7 2-9 5-9s5 3 4 6-4 4-9 3zM12 12c7 0 9 2 9 5s-3 5-6 4-4-4-3-9zM10 12c0 7-2 9-5 9s-5-3-4-6 4-4 9-3z" />
      </svg>
    </TaskItem>
    <TaskItem w="w-[51px]"><FaInternetExplorer size={21} color="#e8e8e8" /></TaskItem>
    <TaskItem w="w-[50px]">
      <span className="relative flex items-center">
        <svg width="20" height="20" viewBox="0 0 20 20" fill="none" stroke="#ccc" strokeWidth="1.500">
          <path d="M17 5A8 8 0 1 0 18 12c-1 3-6 4-8 1s0-7 4-5" />
        </svg>
        <Bell size={12} color="#f3b32a" fill="#f3b32a" className="absolute -top-[5px] -right-[4px]" />
      </span>
    </TaskItem>
    <div className="w-[22px] flex justify-center"><span className="w-[3px] h-[20px] border-x border-[#555]" /></div>
    <TaskItem w="w-[50px]"><FaEdge size={24} color="#0f7ad8" /></TaskItem>
    <TaskItem w="w-[50px]"><FaInternetExplorer size={26} color="#2b9fe8" /></TaskItem>
    <TaskItem w="w-[48px]">
      <svg width="22" height="20" viewBox="0 0 22 20">
        <path d="M0 2h8l2 2h12v16H0z" fill="#f4d774" />
        <path d="M0 7h22v13H0z" fill="#f8e08e" />
        <path d="M8 11h6v9H8z" fill="#2a9fe0" />
      </svg>
    </TaskItem>
    <div className="w-[49px] h-full flex justify-center">
      <TaskItem w="w-[40px]" line>
        <svg width="22" height="24" viewBox="0 0 22 24">
          <path d="M16 1c-8 0-14 5-14 12 0 6 5 10 9 10 6 0 10-4 9-10H11l-1 3h5c-1 2-3 3-4 3-3 0-5-3-5-6 0-5 4-8 8-8 1 0 3 0 4 1 1-2 0-4-1-5z" fill="#1488e0" />
        </svg>
      </TaskItem>
    </div>
    <div className="w-[48px] h-full flex justify-center">
      <TaskItem w="w-[40px]" line>
        <svg width="24" height="24" viewBox="0 0 24 24">
          <circle cx="12" cy="12" r="10" fill="#8ccf3c" stroke="#e8f5d8" strokeWidth="1.500" />
          <path d="M6 12h12M7 8a6 6 0 0 1 10 0M7 16a6 6 0 0 0 10 0" stroke="#fff" strokeWidth="2" fill="none" />
        </svg>
      </TaskItem>
    </div>
    <TaskItem w="w-[50px]" line active>
      <GldLogo size={24} />
    </TaskItem>
    <div className="w-[26px] flex justify-end"><span className="w-[3px] h-[16px] border-x border-[#555]" /></div>
    <span className="ml-[10px] w-[41px] text-[#d8d8d8] whitespace-nowrap">链接</span>
    <div className="w-[60px] text-center leading-[18px] whitespace-nowrap">
      30%
      <br />
      CPU使用
    </div>
    <div className="flex items-center ml-[10px]">
      <ChevronUp size={15} strokeWidth={1.300} className="mr-[9px]" />
      <svg width="16" height="13" viewBox="0 0 16 13" className="mr-[10px]" fill="#fff">
        <path d="M3 0h2v3H3zM0 3h7v4H0zM5 7h9v5H5z" />
      </svg>
      <Wifi size={15} strokeWidth={1.300} className="mr-[6px]" />
      <Volume2 size={15} strokeWidth={1.300} className="mr-[9px]" />
      <Keyboard size={22} strokeWidth={1} className="mr-[9px]" />
      <span className="text-[13px] w-[17px]">中</span>
      <svg width="15" height="16" viewBox="0 0 15 16" className="ml-[11px]">
        <rect width="15" height="16" rx="3" fill="#f04a12" />
        <path d="M11 4H6C3 4 4 8 6 8h3c2 0 2 4-1 4H4" stroke="#fff" strokeWidth="2" fill="none" />
      </svg>
    </div>
    <div className="w-[80px] ml-[8px] text-center leading-[19px] whitespace-nowrap">
      8:28
      <br />
      2018/5/27
    </div>
    <MessageSquare size={18} strokeWidth={1.200} className="ml-[8px]" />
  </div>
);

export default function App() {
  return (
    <div className={`relative w-[1366px] h-[768px] overflow-hidden bg-[#f0f0f0] ${UI}`}>
      <TitleBar />
      <MenuBar />
      <MainToolbar />
      <div className="h-[622px] mt-[2px] flex">
        <LeftPanel />
        <div className="flex-1 flex flex-col min-w-0">
          <SecondToolbar />
          <div className="flex-1 min-h-0 flex ml-[6px]">
            <ListPanel />
            <PropPanel />
          </div>
        </div>
      </div>
      <StatusBar />
      <Taskbar />
      <PlanWindow />
      <OptionDialog />
      {/* sogou ime bar and the green badge float over the title bar */}
      <div className="absolute left-[794px] top-[3px] flex items-center">
        <span className="w-[26px] h-[22px] bg-[#f4521a] rounded-[4px] flex items-center justify-center text-white font-bold text-[20px] leading-none -rotate-6">S</span>
        <div className="w-[184px] h-[23px] -ml-[7px] bg-white border border-[#b9cfe2] flex items-center pl-[10px] gap-[8px] text-[#1d76c8]">
          <span className="text-[14px] font-bold leading-none">中</span>
          <span className="text-[14px] font-bold leading-none w-[10px]">°,</span>
          <Smile size={16} />
          <Mic size={16} />
          <Keyboard size={16} fill="#1d76c8" color="#1d76c8" />
          <User size={15} color="#9fb4c6" />
          <Shirt size={15} fill="#1d76c8" />
          <Wrench size={15} fill="#1d76c8" />
        </div>
      </div>
      <div className="absolute left-[1091px] -top-[28px] w-[47px] h-[47px] rounded-full bg-[#35b558] border-2 border-[#d8d8d8] shadow-[0_2px_4px_rgba(0,0,0,0.4)] flex items-end justify-center pb-[1px] text-white text-[13px] font-bold leading-none">62</div>
    </div>
  );
}
